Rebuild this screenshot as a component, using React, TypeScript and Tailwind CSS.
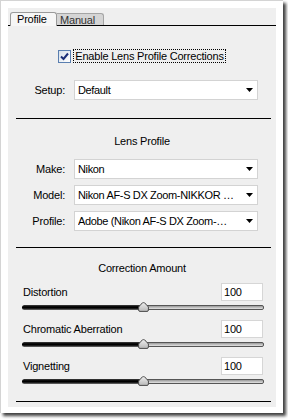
import React from "react";

const SelectBox = ({ value }: { value: string }) => (
  <div className="w-[184px] h-[20px] bg-white border border-[#d3d3d3] flex items-center pl-[3px] pr-[4px]">
    <span className="flex-1 whitespace-nowrap overflow-hidden leading-none tracking-[-0.35px]">{value}</span>
    <svg width="7" height="4" viewBox="0 0 7 4" className="shrink-0">
      <path d="M0 0H7L3.5 4Z" fill="#000" />
    </svg>
  </div>
);

const FieldRow = ({ label, value, top }: { label: string; value: string; top: string }) => (
  <div className={`flex items-center h-[20px] ${top}`}>
    <span className="w-[58px] text-right pr-px">{label}</span>
    <div className="ml-[8px]">
      <SelectBox value={value} />
    </div>
  </div>
);

const Slider = ({ label }: { label: string }) => (
  <div className="mt-[8px]">
    <div className="flex items-center h-[18px] pl-[15px] pr-[13px]">
      <span className="flex-1">{label}</span>
      <div className="w-[42px] h-[18px] bg-white border border-[#d6d6d6] flex items-center pl-[2px]">
        100
      </div>
    </div>
    {/* track + thumb */}
    <div className="relative mt-px h-[10px] ml-[14px] w-[242px] flex items-center">
      <div className="flex w-full h-[5px]">
        <div className="w-1/2 h-full rounded-l-[3px] bg-gradient-to-b from-[#444] via-[#000] to-[#777]" />
        <div className="w-1/2 h-full rounded-r-[2px] border border-[#555] bg-gradient-to-b from-[#999] to-[#e4e4e4]" />
      </div>
      <svg
        width="11"
        height="10"
        viewBox="0 0 11 10"
        className="absolute left-[116px] top-0"
      >
        <defs>
          <linearGradient id="thumbFill" x1="0" y1="0" x2="0" y2="1">
            <stop offset="0" stopColor="#eeeeee" />
            <stop offset="1" stopColor="#b8b8b8" />
          </linearGradient>
        </defs>
        <path
          d="M5.5 0.6 Q6.5 0.6 8 2.2 L10.4 5 L10.4 8 Q10.4 9.4 9 9.4 L2 9.4 Q0.6 9.4 0.6 8 L0.6 5 L3 2.2 Q4.5 0.6 5.5 0.6 Z"
          fill="url(#thumbFill)"
          stroke="#4a4a4a"
          strokeWidth="1"
        />
      </svg>
    </div>
  </div>
);

export default function App() {
  return (
    <div className="w-[288px] h-[420px] bg-white text-[11px] tracking-[-0.2px] text-black font-['Liberation_Sans',Arial,sans-serif]">
      <div className="w-[283px] h-[413px] bg-white border-l border-t border-[#d4d4d4] pl-[7px] pt-[7px] shadow-[3px_3px_3px_rgba(0,0,0,0.75)]">
        <div className="w-[268px] h-[399px] bg-[#efefef] flex flex-col">
          {/* tab strip */}
          <div className="h-[18px] border-b border-black flex items-end pl-[2px]">
            <div className="w-[47px] h-[14px] -mb-px bg-[#f6f6f6] border border-b-0 border-[#9a9a9a] rounded-t-[3px] pl-[6px] leading-[13px]">
              Profile
            </div>
            <div className="w-[47px] h-[12px] bg-[#d5d5d5] border border-l-0 border-b-0 border-[#a5a5a5] rounded-tr-[3px] pl-[3px] leading-[12px] text-[#333]">
              Manual
            </div>
          </div>

          {/* enable checkbox */}
          <div className="mt-[23px] h-[14px] flex items-center justify-center">
            <div className="w-[13px] h-[13px] border border-[#5a7fb0] bg-gradient-to-br from-[#d7e0ea] to-white flex items-center justify-center">
              <svg width="9" height="9" viewBox="0 0 9 9">
                <path d="M1 4.5 L3.5 7 L8 1.5" fill="none" stroke="#1b2f78" strokeWidth="2" />
              </svg>
            </div>
            <span className="ml-[2px] h-[14px] px-px border border-dotted border-black leading-[12px]">
              Enable Lens Profile Corrections
            </span>
          </div>

          <FieldRow label="Setup:" value="Default" top="mt-[17px]" />

          <div className="mt-[18px] h-px bg-black ml-[8px] mr-[5px]" />

          <div className="mt-[15px] h-[14px] leading-[14px] text-center">Lens Profile</div>

          <FieldRow label="Make:" value="Nikon" top="mt-[11px]" />
          <FieldRow label="Model:" value="Nikon AF-S DX Zoom-NIKKOR …" top="mt-[6px]" />
          <FieldRow label="Profile:" value="Adobe (Nikon AF-S DX Zoom-…" top="mt-[6px]" />

          <div className="mt-[16px] h-px bg-black ml-[8px] mr-[5px]" />

          <div className="mt-[13px] h-[14px] leading-[14px] text-center">Correction Amount</div>

          <Slider label="Distortion" />
          <Slider label="Chromatic Aberration" />
          <Slider label="Vignetting" />

          <div className="mt-[15px] h-px bg-black ml-[8px] mr-[5px]" />
        </div>
      </div>
    </div>
  );
}
